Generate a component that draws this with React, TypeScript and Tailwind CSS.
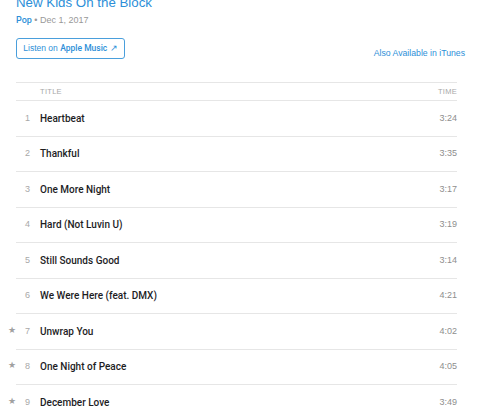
const tracks = [
  { n: 1, title: "Heartbeat", time: "3:24" },
  { n: 2, title: "Thankful", time: "3:35" },
  { n: 3, title: "One More Night", time: "3:17" },
  { n: 4, title: "Hard (Not Luvin U)", time: "3:19" },
  { n: 5, title: "Still Sounds Good", time: "3:14" },
  { n: 6, title: "We Were Here (feat. DMX)", time: "4:21" },
  { n: 7, title: "Unwrap You", time: "4:02", star: true },
  { n: 8, title: "One Night of Peace", time: "4:05", star: true },
  { n: 9, title: "December Love", time: "3:49", star: true },
];

const App = () => {
  return (
    <div className="w-[479px] h-[410px] overflow-hidden bg-white pl-4 pr-[14px] font-['Liberation_Sans',Arial,sans-serif]">
      <div className="mt-[-5px] text-[13.3px] leading-[16px] text-[#2d8fd8]">New Kids On the Block</div>
      <div className="mt-[3px] text-[9px] leading-[12px] text-[#999999]">
        <span className="font-['Roboto',sans-serif] font-medium text-[#2d8fd8]">Pop</span> • Dec 1, 2017
      </div>

      <div className="mt-[12px] flex items-end justify-between">
        <button className="h-[21px] w-[109px] rounded-[3px] border border-[#4a9fdc] text-[8.5px] text-[#2d8fd8] flex items-center justify-center">
          Listen on&nbsp;<span className="font-['Roboto',sans-serif] font-medium">Apple Music</span>&nbsp;↗
        </button>
        <a className="text-[8.7px] leading-[12px] text-[#2d8fd8]">Also Available in iTunes</a>
      </div>

      <div className="mt-[23px] mr-[8px]">
        <div className="h-[19px] border-y border-[#e6e6e6] flex items-center text-[7.5px] tracking-[0.3px] text-[#a8a8a8]">
          <span className="ml-[24px]">TITLE</span>
          <span className="ml-auto">TIME</span>
        </div>
        {tracks.map((t) => (
          <div key={t.n} className="h-[35.5px] border-b border-[#e6e6e6] flex items-center">
            <div className="relative w-[14px] text-right text-[9px] text-[#a8a8a8]">
              {t.star && <span className="absolute left-[-8px] top-[-1px] text-[9px] text-[#a0a0a0]">★</span>}
              {t.n}
            </div>
            <div className="ml-[10px] font-['Roboto',sans-serif] text-[10px] font-medium text-[#1d1d1f]">{t.title}</div>
            <div className="ml-auto text-[9px] text-[#8e8e8e]">{t.time}</div>
          </div>
        ))}
      </div>
    </div>
  );
};

export default App;
